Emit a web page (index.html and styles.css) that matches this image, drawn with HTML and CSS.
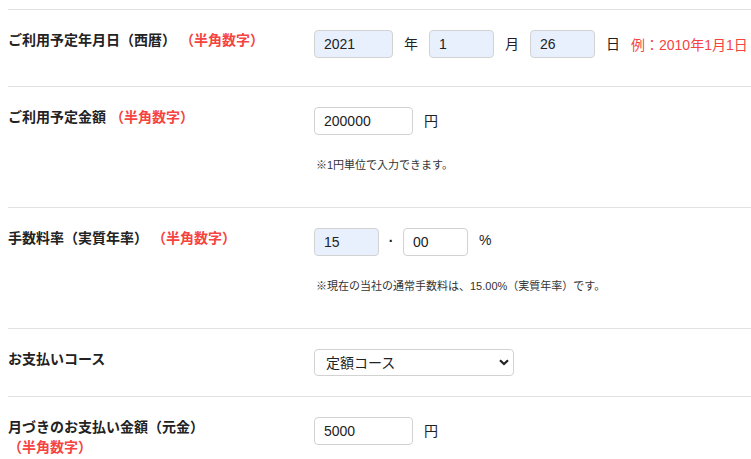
FILE: index.html
```html
<!DOCTYPE html>
<html lang="ja">
<head>
  <meta charset="UTF-8" />
  <meta name="viewport" content="width=device-width, initial-scale=1.0" />
  <title>ご利用シミュレーション</title>
  <link rel="stylesheet" href="styles.css">
</head>
<body>
  <div class="form-table">
    <!-- 利用予定日 -->
    <div class="row">
      <div class="label">ご利用予定年月日（西暦） <span class="req">（半角数字）</span></div>
      <div class="field">
        <div class="inline date-line">
          <input class="filled w-year" type="text" value="2021">
          <span class="unit">年</span>
          <input class="filled w-day" type="text" value="1">
          <span class="unit">月</span>
          <input class="filled w-day" type="text" value="26">
          <span class="unit">日</span>
          <span class="example">例：2010年1月1日</span>
        </div>
      </div>
    </div>

    <!-- 利用予定金額 -->
    <div class="row">
      <div class="label">ご利用予定金額 <span class="req">（半角数字）</span></div>
      <div class="field">
        <div class="inline">
          <input class="w-amount" type="text" value="200000">
          <span class="unit">円</span>
        </div>
        <p class="note">※1円単位で入力できます。</p>
      </div>
    </div>

    <!-- 手数料率 -->
    <div class="row">
      <div class="label">手数料率（実質年率） <span class="req">（半角数字）</span></div>
      <div class="field">
        <div class="inline">
          <input class="filled w-day" type="text" value="15">
          <span class="sep">·</span>
          <input class="w-day" type="text" value="00">
          <span class="unit pct">%</span>
        </div>
        <p class="note">※現在の当社の通常手数料は、15.00%（実質年率）です。</p>
      </div>
    </div>

    <!-- 支払いコース -->
    <div class="row">
      <div class="label">お支払いコース</div>
      <div class="field">
        <div class="select-wrap">
          <select>
            <option>定額コース</option>
            <option>元金定額コース</option>
          </select>
          <svg class="chevron" width="10" height="7" viewBox="0 0 10 7">
            <path d="M1 1.2 L5 5 L9 1.2" fill="none" stroke="#222" stroke-width="2.2"/>
          </svg>
        </div>
      </div>
    </div>

    <!-- 月づきの支払い金額 -->
    <div class="row">
      <div class="label">月づきのお支払い金額（元金）<br><span class="req">（半角数字）</span></div>
      <div class="field">
        <div class="inline">
          <input class="w-amount" type="text" value="5000">
          <span class="unit">円</span>
        </div>
      </div>
    </div>
  </div>
</body>
</html>
```

FILE: styles.css
```css
* {
  margin: 0;
  padding: 0;
  box-sizing: border-box;
}
body {
  font-family: "Liberation Sans", "Noto Sans CJK JP", sans-serif;
  font-size: 14px;
  color: #222;
  background-color: #fff;
  padding: 9px 0 0 8px;
}
/* Table rows */
.row {
  display: grid;
  grid-template-columns: 306px 1fr;
  border-top: 1px solid #e2e2e2;
  padding: 20px 0;
}
.label {
  font-weight: bold;
  line-height: 20px;
}
.req {
  color: #f5443f;
}
/* Inputs */
.inline {
  display: flex;
  align-items: center;
  height: 28px;
}
.date-line {
  margin-bottom: 8px;
}
input {
  height: 28px;
  border: 1px solid #d2d2d2;
  border-radius: 4px;
  padding: 0 9px;
  font-family: inherit;
  font-size: 14px;
  color: #222;
  background-color: #fff;
}
input.filled {
  background-color: #e8f0fe;
}
.w-year {
  width: 79px;
}
.w-day {
  width: 65px;
}
.w-amount {
  width: 99px;
}
.unit {
  padding: 0 11px;
  line-height: 20px;
}
.pct {
  margin-top: -4px;
}
.sep {
  width: 24px;
  text-align: center;
  font-weight: bold;
  margin-top: -2px;
}
.example {
  color: #f5443f;
}
.note {
  font-size: 11px;
  line-height: 18px;
  color: #333;
  margin: 21px 0 13px 2px;
}
/* Select */
.select-wrap {
  position: relative;
  width: 200px;
}
select {
  appearance: none;
  width: 200px;
  height: 27px;
  border: 1px solid #d2d2d2;
  border-radius: 4px;
  padding: 0 11px;
  font-family: inherit;
  font-size: 14px;
  color: #222;
  background-color: #fff;
}
.chevron {
  position: absolute;
  right: 5px;
  top: 10px;
}
```
